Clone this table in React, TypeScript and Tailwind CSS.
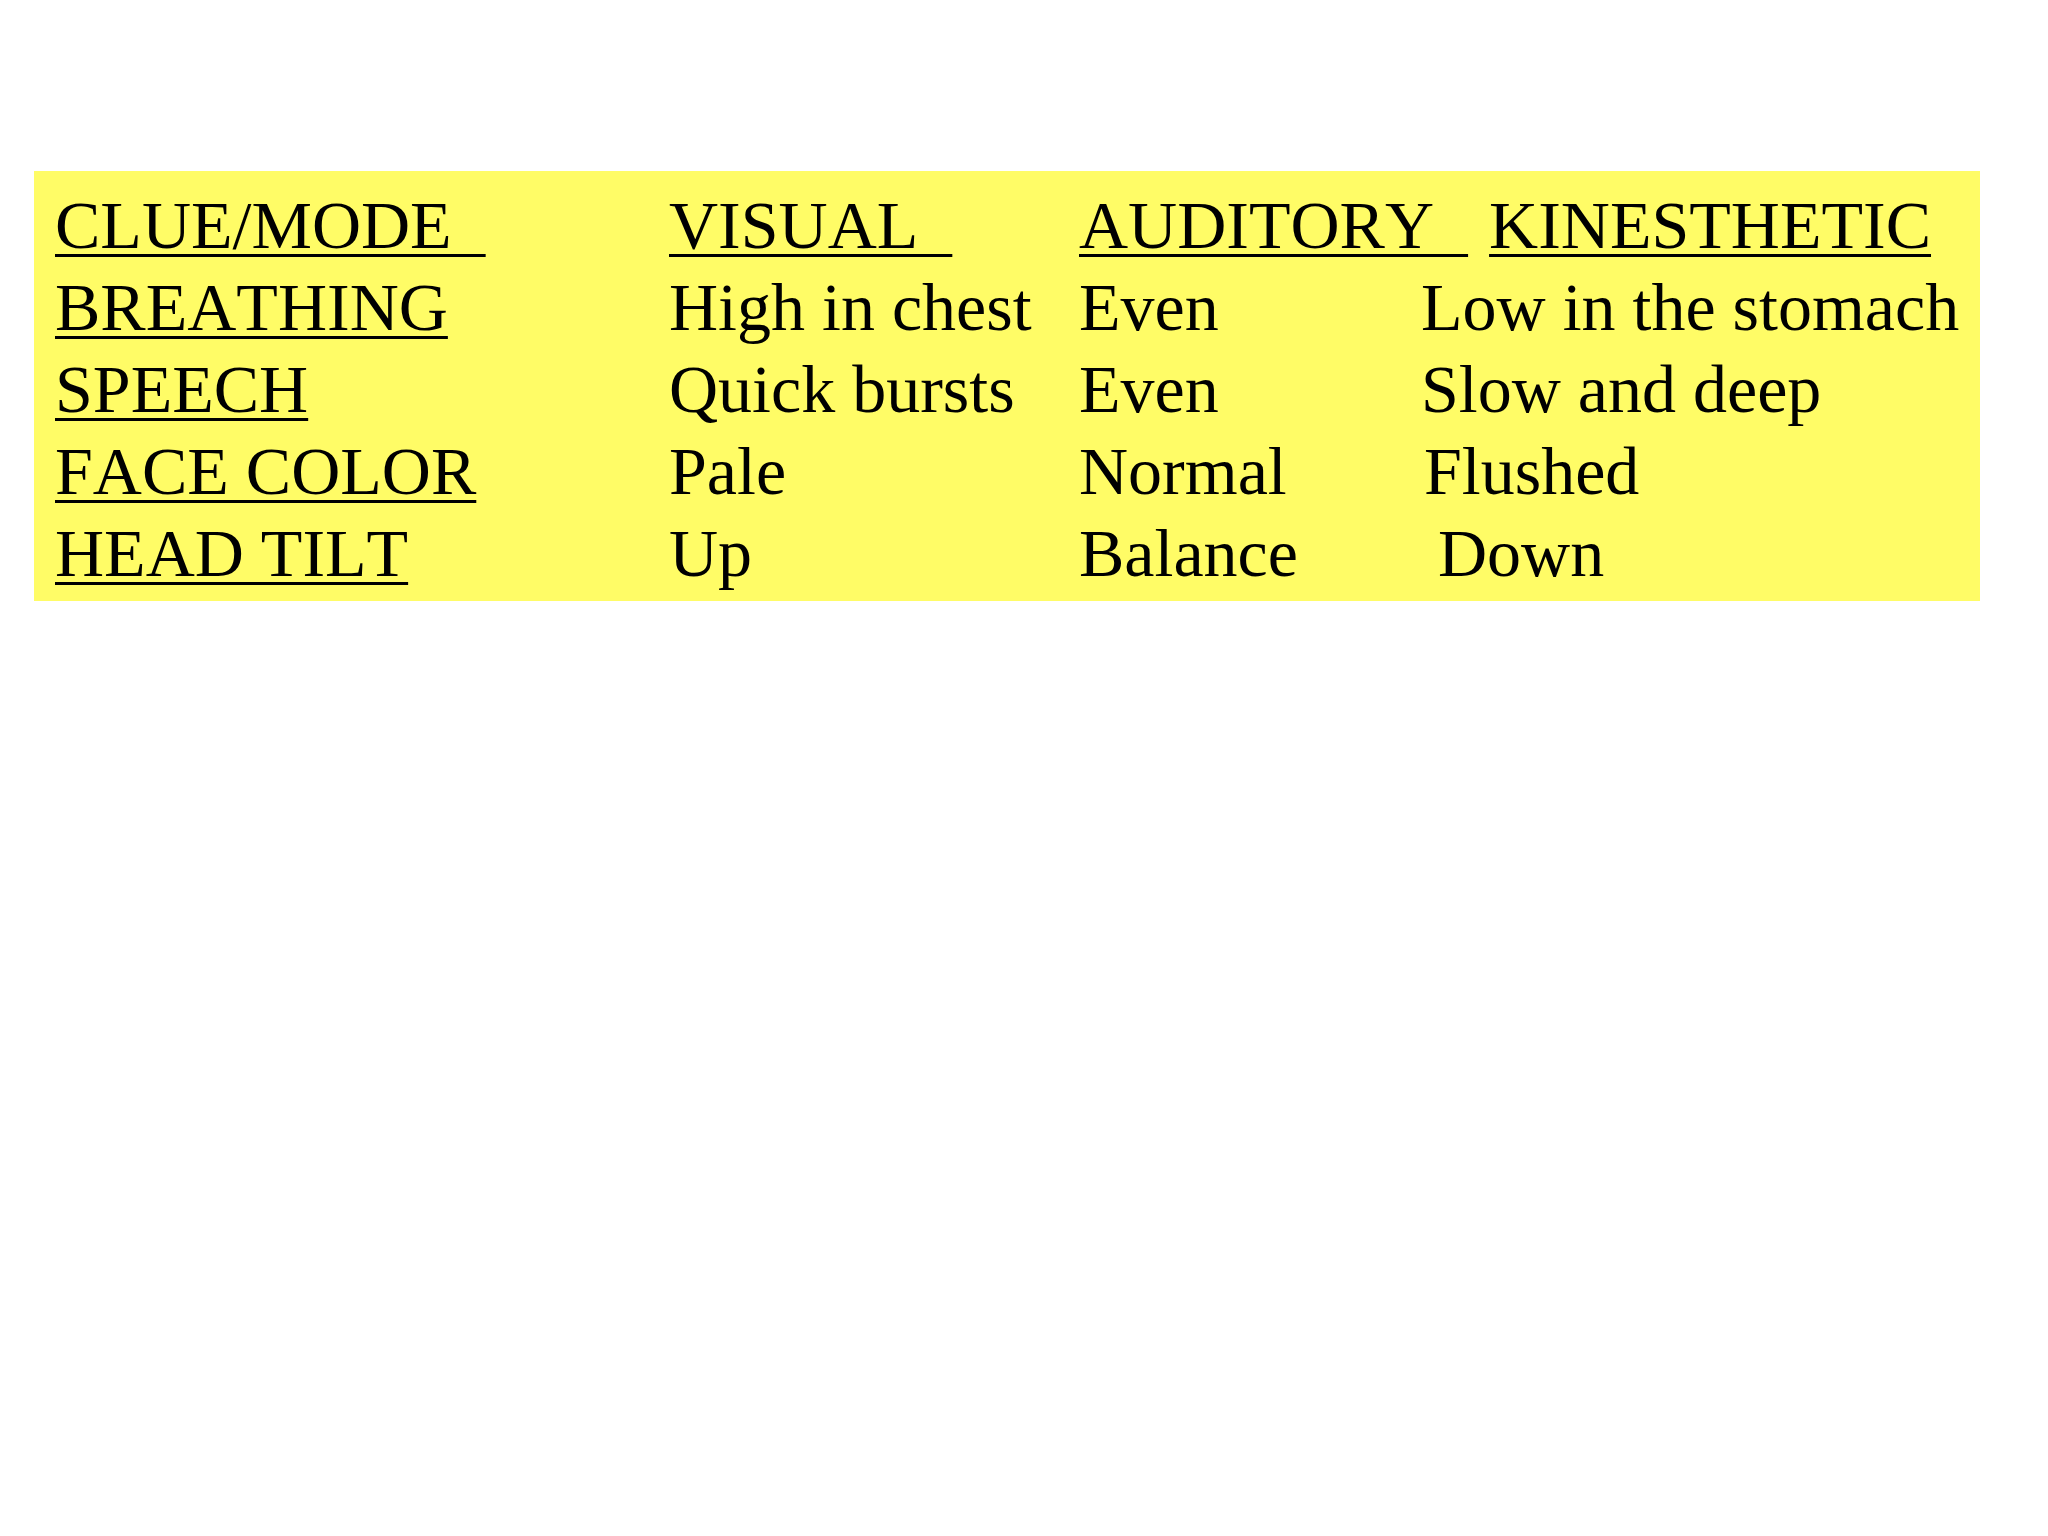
import React from 'react';

const rows = [
  ['BREATHING', 'High in chest', 'Even', 'Low in the stomach'],
  ['SPEECH', 'Quick bursts', 'Even', 'Slow and deep'],
  ['FACE COLOR', 'Pale', 'Normal', 'Flushed'],
  ['HEAD TILT', 'Up', 'Balance', ' Down'],
];

const u = 'underline decoration-[3px] underline-offset-[6px]';

const App = () => {
  return (
    <div className="min-h-screen w-full bg-white pt-[171px] pl-[34px]" style={{ fontFamily: '"Liberation Serif", "Times New Roman", serif' }}>
      <div className="w-[1946px] bg-[#fffc66] pt-[13px] pb-[7px] pl-[21px] text-[68px] leading-[82px] text-black whitespace-pre [font-kerning:none]">
        <div className="grid grid-cols-[614px_410px_342px_1fr]">
          <div>
            <span className={u}>{'CLUE/MODE  '}</span>
          </div>
          <div>
            <span className={u}>{'VISUAL  '}</span>
          </div>
          <div className="col-span-2">
            <span className={u}>{'AUDITORY  '}</span> <span className={`${u} ml-[4px]`}>KINESTHETIC</span>
          </div>
        </div>
        {rows.map((row, i) => (
          <div key={i} className="grid grid-cols-[614px_410px_342px_1fr]">
            <div>
              <span className={u}>{row[0]}</span>
            </div>
            <div>{row[1]}</div>
            <div>{row[2]}</div>
            <div className={row[3] === 'Flushed' ? 'pl-[3px]' : ''}>{row[3]}</div>
          </div>
        ))}
      </div>
    </div>
  );
};

export default App;
